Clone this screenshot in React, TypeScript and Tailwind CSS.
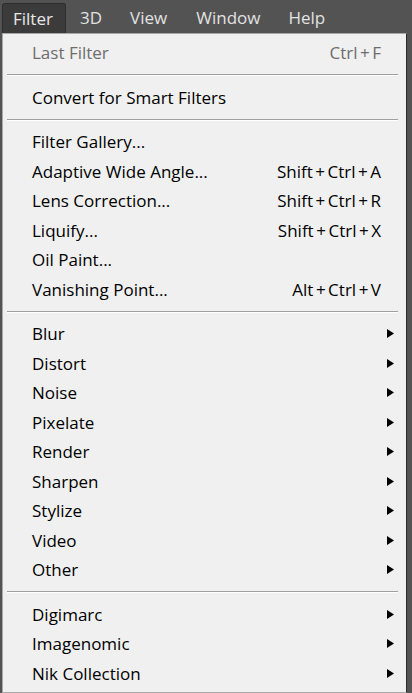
import React from "react";

type Item =
  | { kind: "sep" }
  | { kind: "item"; label: string; shortcut?: string; sub?: boolean; disabled?: boolean };

const items: Item[] = [
  { kind: "item", label: "Last Filter", shortcut: "Ctrl+F", disabled: true },
  { kind: "sep" },
  { kind: "item", label: "Convert for Smart Filters" },
  { kind: "sep" },
  { kind: "item", label: "Filter Gallery..." },
  { kind: "item", label: "Adaptive Wide Angle...", shortcut: "Shift+Ctrl+A" },
  { kind: "item", label: "Lens Correction...", shortcut: "Shift+Ctrl+R" },
  { kind: "item", label: "Liquify...", shortcut: "Shift+Ctrl+X" },
  { kind: "item", label: "Oil Paint..." },
  { kind: "item", label: "Vanishing Point...", shortcut: "Alt+Ctrl+V" },
  { kind: "sep" },
  { kind: "item", label: "Blur", sub: true },
  { kind: "item", label: "Distort", sub: true },
  { kind: "item", label: "Noise", sub: true },
  { kind: "item", label: "Pixelate", sub: true },
  { kind: "item", label: "Render", sub: true },
  { kind: "item", label: "Sharpen", sub: true },
  { kind: "item", label: "Stylize", sub: true },
  { kind: "item", label: "Video", sub: true },
  { kind: "item", label: "Other", sub: true },
  { kind: "sep" },
  { kind: "item", label: "Digimarc", sub: true },
  { kind: "item", label: "Imagenomic", sub: true },
  { kind: "item", label: "Nik Collection", sub: true },
];

function Arrow() {
  return (
    <svg width="7" height="9" viewBox="0 0 7 9" className="block">
      <path d="M0 0 L7 4.5 L0 9 Z" fill="#000" />
    </svg>
  );
}

// shortcuts: the "+" sits a bit looser, like the Windows menu font
function Shortcut({ text }: { text: string }) {
  const parts = text.split("+");
  return (
    <>
      {parts.map((p, i) => (
        <React.Fragment key={i}>
          {i > 0 && <span className="mx-[2.5px]">+</span>}
          {p}
        </React.Fragment>
      ))}
    </>
  );
}

export default function App() {
  return (
    <div
      className="w-[412px] h-[693px] overflow-hidden bg-[#535353] text-[17px] font-medium"
      style={{ fontFamily: '"Open Sans", "Noto Sans", sans-serif' }}
    >
      {/* Menu bar */}
      <div className="h-[33px] flex items-end pl-[2px]">
        <div className="h-[30px] w-[64px] rounded-t-[3px] bg-[#3b3b3b] border border-b-0 border-[#2e2e2e] flex items-center pl-[10px] text-[#e8e8e8]">
          Filter
        </div>
        <div className="flex h-[30px] items-center text-[#e2e2e2]">
          <span className="ml-[14px]">3D</span>
          <span className="ml-[28px]">View</span>
          <span className="ml-[29px]">Window</span>
          <span className="ml-[28px]">Help</span>
        </div>
      </div>

      {/* Dropdown */}
      <div className="ml-[2px] w-[405px] h-[660px] bg-[#f0f0f0] border border-[#a8a8a8] border-r-[#2a2a2a] pt-[4px] text-black">
        {items.map((it, i) =>
          it.kind === "sep" ? (
            <div key={i} className="h-[15px] flex items-center pl-[4px] pr-[8px]">
              <div className="w-full h-[2px] border-t border-[#a0a0a0] border-b border-b-white" />
            </div>
          ) : (
            <div key={i} className="h-[29.5px] flex items-center pl-[29px] pr-[12px]">
              <span className={it.disabled ? "text-[#6d6d6d]" : ""}>{it.label}</span>
              <span className="flex-1" />
              {it.shortcut && (
                <span className={"mr-[13px] " + (it.disabled ? "text-[#6d6d6d]" : "")}>
                  <Shortcut text={it.shortcut} />
                </span>
              )}
              {it.sub && <Arrow />}
            </div>
          )
        )}
      </div>
    </div>
  );
}
